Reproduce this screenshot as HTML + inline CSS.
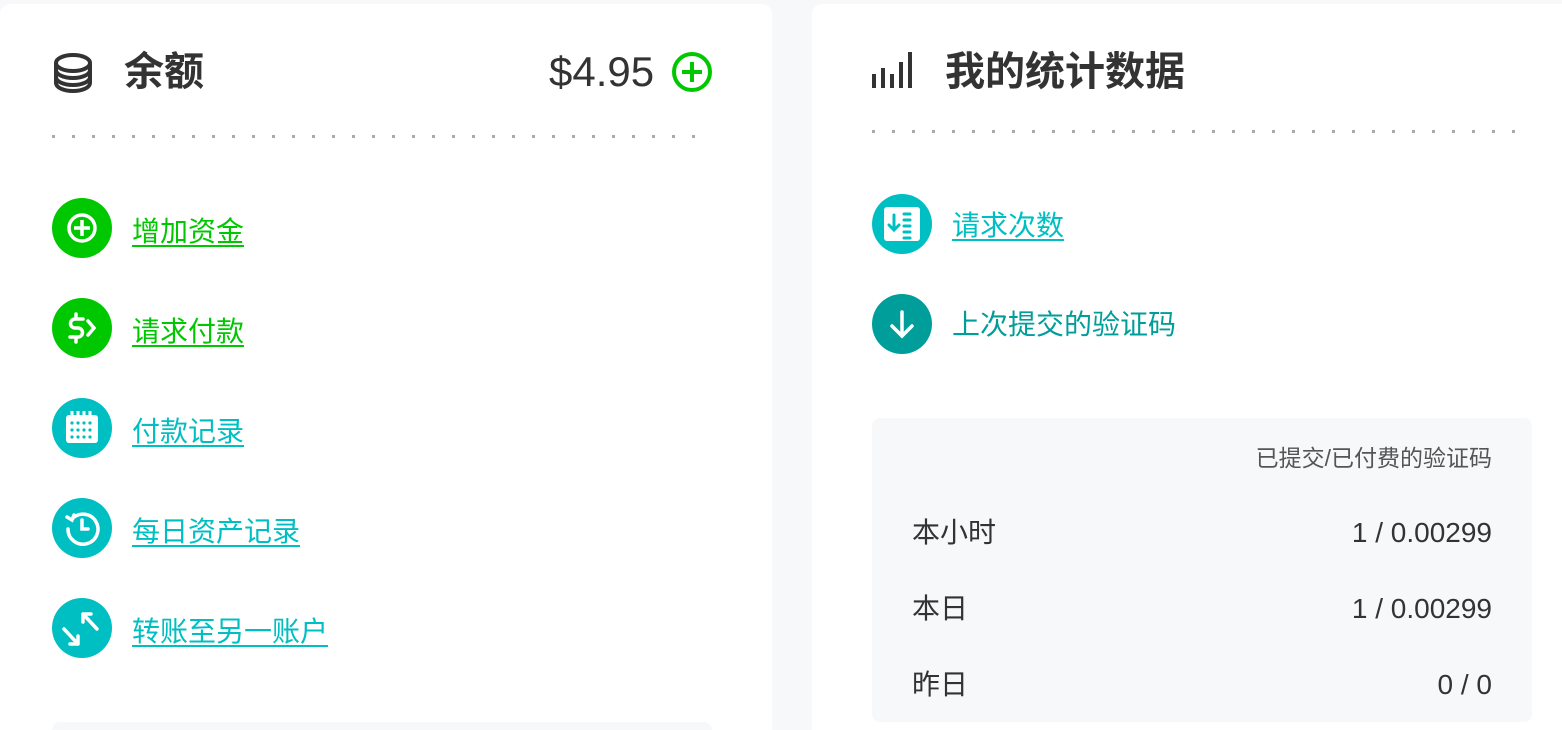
<!DOCTYPE html>
<html><head><meta charset="utf-8"><style>
html,body{margin:0;width:1562px;height:730px;overflow:hidden;}
body{background:#f7f8fa;position:relative;font-family:"Liberation Sans","Noto Sans CJK SC",sans-serif;}
.card{position:absolute;top:4px;height:726px;background:#fff;border-radius:10px 10px 0 0;overflow:hidden;}
.abs{position:absolute;}
.title{font-size:40px;font-weight:bold;color:#333;line-height:44px;}
.dots{position:absolute;height:4px;background:linear-gradient(90deg,#aaa 0 3px,transparent 3px) 0 0/20px 3px repeat-x;}
.ic{position:absolute;width:60px;height:60px;border-radius:50%;}
.ic svg{position:absolute;left:0;top:0}
.lk{position:absolute;font-size:28px;line-height:32px;text-decoration:underline;text-underline-offset:4px;}
.g{color:#00c800}.gb{background:#00c800}
.t{color:#00bfc2}.tb{background:#00bfc2}
.row{position:absolute;left:40px;right:40px;font-size:28px;color:#333;line-height:32px;}
.row span{float:right}
</style></head><body>
<div class="card" style="left:0;width:772px;">
  <svg class="abs" style="left:52px;top:48px" width="42" height="42" viewBox="0 0 42 42" fill="none" stroke="#333" stroke-width="4"><ellipse cx="21" cy="11" rx="17" ry="8"/><path d="M4 11v20c0 4.5 7.6 8 17 8s17-3.5 17-8V11M4 18c0 4.5 7.6 8 17 8s17-3.5 17-8M4 25c0 4.5 7.6 8 17 8s17-3.5 17-8"/></svg>
  <div class="abs title" style="left:124px;top:46px">余额</div>
  <div class="abs" style="left:549px;top:45px;font-size:42px;color:#333;line-height:46px">$4.95</div>
  <svg class="abs" style="left:671px;top:47px" width="42" height="42" viewBox="0 0 42 42" fill="none" stroke="#00c800" stroke-width="4"><circle cx="21" cy="21" r="18"/><path d="M21 11v20M11 21h20"/></svg>
  <div class="dots" style="left:52px;top:131px;width:660px"></div>
  <div class="ic gb" style="left:52px;top:194px"><svg width="60" height="60" fill="none" stroke="#fff" stroke-width="3.5"><circle cx="30" cy="30" r="13"/><path d="M30 22v16M22 30h16"/></svg></div>
  <div class="lk g" style="left:132px;top:212px">增加资金</div>
  <div class="ic gb" style="left:52px;top:294px"><svg width="60" height="60" fill="none" stroke="#fff" stroke-width="3.5" stroke-linecap="round"><path d="M31 21h-8a4.5 4.5 0 0 0 0 9h3a4.5 4.5 0 0 1 0 9h-8M24 16v5M24 39v5M36 23l6 7-6 7"/></svg></div>
  <div class="lk g" style="left:132px;top:312px">请求付款</div>
  <div class="ic tb" style="left:52px;top:394px"><svg width="60" height="60"><rect x="14" y="17" width="32" height="28" rx="3" fill="#fff"/><g fill="#00bfc2"><circle cx="20" cy="25" r="1.6"/><circle cx="26" cy="25" r="1.6"/><circle cx="32" cy="25" r="1.6"/><circle cx="38" cy="25" r="1.6"/><circle cx="20" cy="32" r="1.6"/><circle cx="26" cy="32" r="1.6"/><circle cx="32" cy="32" r="1.6"/><circle cx="38" cy="32" r="1.6"/><circle cx="20" cy="39" r="1.6"/><circle cx="26" cy="39" r="1.6"/><circle cx="32" cy="39" r="1.6"/><circle cx="38" cy="39" r="1.6"/></g><g stroke="#fff" stroke-width="3"><path d="M20 13v5M26 13v5M32 13v5M38 13v5"/></g></svg></div>
  <div class="lk t" style="left:132px;top:412px">付款记录</div>
  <div class="ic tb" style="left:52px;top:494px"><svg width="60" height="60" fill="none" stroke="#fff" stroke-width="3.5" stroke-linecap="round"><path d="M20 21a15 15 0 1 1-4 10"/><path d="M15 19l5 3 2-5"/><path d="M30 22v9h6"/></svg></div>
  <div class="lk t" style="left:132px;top:512px">每日资产记录</div>
  <div class="ic tb" style="left:52px;top:594px"><svg width="60" height="60" fill="none" stroke="#fff" stroke-width="3.5" stroke-linecap="round" stroke-linejoin="round"><path d="M12 31l14 15M26 38v8h-8M31 16l14 15M31 24v-8h8"/></svg></div>
  <div class="lk t" style="left:132px;top:612px">转账至另一账户</div>
  <div class="abs" style="left:52px;top:718px;width:660px;height:40px;background:#f7f8fa;border-radius:8px"></div>
</div>
<div class="card" style="left:812px;width:760px;">
  <svg class="abs" style="left:58px;top:44px" width="44" height="44"><g fill="#333"><rect x="2" y="26" width="4" height="14"/><rect x="11" y="20" width="4" height="20"/><rect x="20" y="26" width="4" height="14"/><rect x="29" y="14" width="4" height="26"/><rect x="38" y="4" width="4" height="36"/></g></svg>
  <div class="abs title" style="left:133px;top:46px">我的统计数据</div>
  <div class="dots" style="left:60px;top:126px;width:660px"></div>
  <div class="ic tb" style="left:60px;top:190px"><svg width="60" height="60"><rect x="12" y="13" width="36" height="34" rx="3" fill="#fff"/><g stroke="#00bfc2" stroke-width="3" fill="none" stroke-linecap="round"><path d="M22 21v15M17 31l5 5 5-5M32 20h6M32 26h6M32 32h6M32 38h6M32 44h6"/></g></svg></div>
  <div class="lk t" style="left:140px;top:206px">请求次数</div>
  <div class="ic" style="left:60px;top:290px;background:#009e9a"><svg width="60" height="60" fill="none" stroke="#fff" stroke-width="3.5" stroke-linecap="round"><path d="M30 18v24M20 32l10 10 10-10"/></svg></div>
  <div class="abs" style="left:140px;top:305px;font-size:28px;line-height:32px;color:#009e9a">上次提交的验证码</div>
  <div class="abs" style="left:60px;top:414px;width:660px;height:304px;background:#f7f8fa;border-radius:8px">
    <div class="abs" style="right:40px;top:26px;font-size:23px;color:#555;line-height:28px">已提交/已付费的验证码</div>
    <div class="row" style="top:99px">本小时<span>1 / 0.00299</span></div>
    <div class="row" style="top:175px">本日<span>1 / 0.00299</span></div>
    <div class="row" style="top:251px">昨日<span>0 / 0</span></div>
  </div>
</div>
</body></html>
